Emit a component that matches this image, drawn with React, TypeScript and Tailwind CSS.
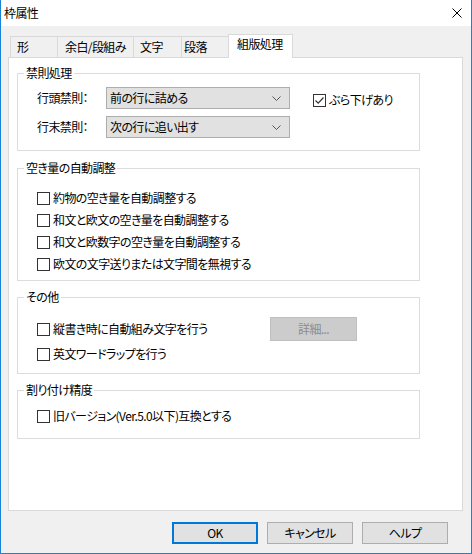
const TABS = [
  { label: "形", w: "w-[48px]", pl: "pl-[6px]" },
  { label: "余白/段組み", w: "w-[77px]", pl: "pl-[7px]" },
  { label: "文字", w: "w-[49px]", pl: "pl-[6px]" },
  { label: "段落", w: "w-[48px]", pl: "pl-[2px]" },
];

const SPACING = [
  "約物の空き量を自動調整する",
  "和文と欧文の空き量を自動調整する",
  "和文と欧数字の空き量を自動調整する",
  "欧文の文字送りまたは文字間を無視する",
];

function Box({ checked }: { checked?: boolean }) {
  return (
    <span className="flex h-[13px] w-[13px] shrink-0 items-center justify-center border border-[#333333] bg-white">
      {checked && (
        <svg width="11" height="11" viewBox="0 0 11 11">
          <path d="M1.5 5.5 L4.2 8.2 L9.5 2.5" fill="none" stroke="#333333" strokeWidth="1.2" />
        </svg>
      )}
    </span>
  );
}

function Check({ label, checked, className = "" }: { label: string; checked?: boolean; className?: string }) {
  return (
    <div className={`flex h-[22px] items-center gap-[3px] ${className}`}>
      <Box checked={checked} />
      <span className="whitespace-nowrap">{label}</span>
    </div>
  );
}

function Group({ title, className = "", children }: { title: string; className?: string; children: React.ReactNode }) {
  return (
    <fieldset className={`ml-[8px] w-[403px] border border-[#dcdcdc] ${className}`}>
      <legend className="ml-[6px] px-[2px] leading-[16px]">{title}</legend>
      {children}
    </fieldset>
  );
}

function Select({ label, value }: { label: string; value: string }) {
  return (
    <div className="flex h-[22px] items-center">
      <span className="w-[69px] whitespace-nowrap">{label}</span>
      <div className="flex h-[22px] w-[184px] items-center justify-between border border-[#adadad] bg-[#e1e1e1] pl-[3px] pr-[8px]">
        <span>{value}</span>
        <svg width="9" height="5" viewBox="0 0 9 5">
          <path d="M0.5 0.5 L4.5 4.5 L8.5 0.5" fill="none" stroke="#555555" strokeWidth="1" />
        </svg>
      </div>
    </div>
  );
}

function Button({ label, primary }: { label: string; primary?: boolean }) {
  return (
    <div
      className={`flex h-[22px] w-[86px] items-center justify-center bg-[#e1e1e1] ${
        primary ? "border-2 border-[#0078d7]" : "border border-[#adadad]"
      }`}
    >
      {label}
    </div>
  );
}

export default function App() {
  return (
    <div className="flex h-[554px] w-[472px] flex-col border-x border-b border-[#1883d7] bg-[#f0f0f0] font-['Noto_Sans_CJK_JP','Liberation_Sans',sans-serif] text-[12px] leading-[16px] tracking-[-0.6px] text-black [font-feature-settings:'palt']">
      <div className="flex h-[26px] shrink-0 items-center justify-between bg-white pl-[3px] pr-[9px]">
        <span>枠属性</span>
        <svg width="10" height="10" viewBox="0 0 10 10">
          <path d="M0.5 0.5 L9.5 9.5 M9.5 0.5 L0.5 9.5" stroke="#000000" strokeWidth="1" />
        </svg>
      </div>

      <div className="pl-[7px] pr-[8px] pt-[8px]">
        <div className="relative z-10 ml-[2px] flex h-[24px] items-end">
          {TABS.map((t, i) => (
            <div
              key={t.label}
              className={`h-[22px] ${t.w} ${t.pl} ${i > 0 ? "-ml-px" : ""} border border-[#d9d9d9] bg-[#f0f0f0] pt-[2px] whitespace-nowrap`}
            >
              {t.label}
            </div>
          ))}
          <div className="-ml-px h-[24px] w-[65px] border-x border-t border-[#d9d9d9] bg-white pl-[8px] pt-[1px] whitespace-nowrap">
            組版処理
          </div>
        </div>

        <div className="-mt-px flex h-[454px] flex-col border border-[#d9d9d9] bg-white">
          <Group title="禁則処理" className="mt-[7px]">
            <div className="flex pb-[12px] pl-[19px] pt-[6px]">
              <div className="flex flex-col gap-[7px]">
                <Select label="行頭禁則：" value="前の行に詰める" />
                <Select label="行末禁則：" value="次の行に追い出す" />
              </div>
              <Check label="ぶら下げあり" checked className="ml-[23px] mt-[2px]" />
            </div>
          </Group>

          <Group title="空き量の自動調整" className="mt-[9px]">
            <div className="flex flex-col pb-[5px] pl-[19px] pt-[11px]">
              {SPACING.map((s) => (
                <Check key={s} label={s} />
              ))}
            </div>
          </Group>

          <Group title="その他" className="mt-[8px]">
            <div className="flex flex-col pb-[7px] pl-[19px] pt-[12px]">
              <div className="flex h-[24px] items-center">
                <Check label="縦書き時に自動組み文字を行う" className="w-[233px]" />
                <div className="flex h-[24px] w-[87px] items-center justify-center border border-[#bfbfbf] bg-[#cccccc] text-[#8c8c8c]">
                  詳細...
                </div>
              </div>
              <div className="mt-[1px] flex h-[24px] items-center">
                <Check label="英文ワードラップを行う" />
              </div>
            </div>
          </Group>

          <Group title="割り付け精度" className="mt-[8px]">
            <div className="pb-[11px] pl-[19px] pt-[7px]">
              <Check label="旧バージョン(Ver.5.0以下)互換とする" />
            </div>
          </Group>
        </div>

        <div className="mt-[11px] flex justify-end gap-[9px] pr-[15px]">
          <Button label="OK" primary />
          <Button label="キャンセル" />
          <Button label="ヘルプ" />
        </div>
      </div>
    </div>
  );
}
